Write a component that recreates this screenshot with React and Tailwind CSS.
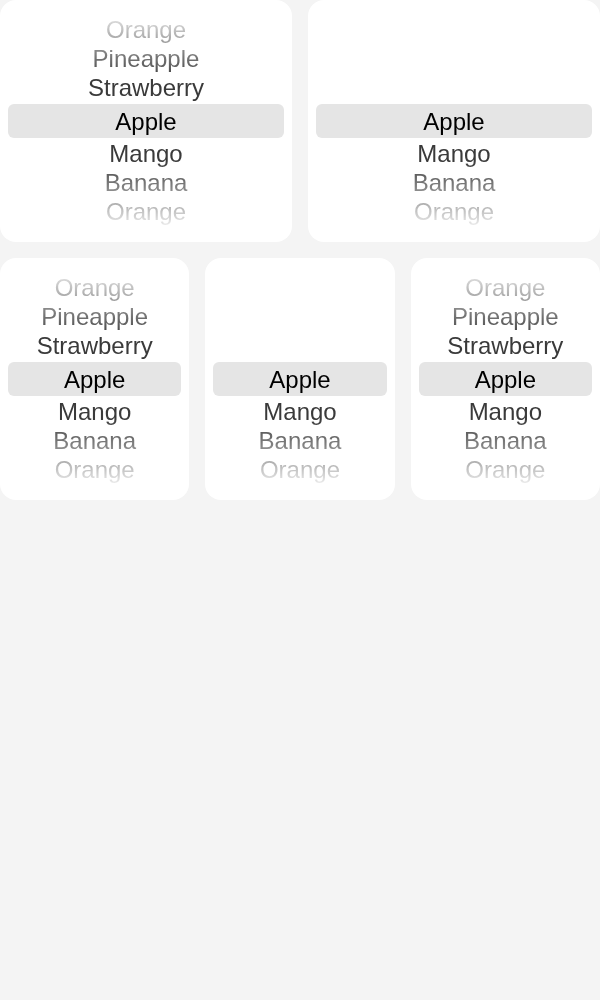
import React from "react";

const FULL = ["Orange", "Pineapple", "Strawberry"];
const BELOW = ["Mango", "Banana", "Orange"];

function Picker({ showAbove }) {
  return (
    <div className="rounded-2xl bg-white p-2">
      <div className="relative h-[226px] overflow-hidden">
        <div className="absolute left-0 right-0 top-[96px] h-[34px] rounded-md bg-[#e5e5e5]" />
        <div
          className="relative flex h-full -translate-y-px flex-col justify-center text-center text-[24px] leading-[29px] text-[#3a3a3a]"
          style={{
            fontFamily: '"Liberation Sans", Arial, sans-serif',
            WebkitMaskImage:
              "linear-gradient(to bottom, rgba(0,0,0,0) 0%, rgba(0,0,0,1) 32%, rgba(0,0,0,1) 68%, rgba(0,0,0,0) 100%)",
            maskImage:
              "linear-gradient(to bottom, rgba(0,0,0,0) 0%, rgba(0,0,0,1) 32%, rgba(0,0,0,1) 68%, rgba(0,0,0,0) 100%)",
          }}
        >
          {FULL.map((f, i) => (
            <div key={"a" + i} className="h-[29px]">
              {showAbove ? f : "\u00a0"}
            </div>
          ))}
          <div className="flex h-[37px] translate-y-px items-center justify-center text-black">Apple</div>
          {BELOW.map((f, i) => (
            <div key={"b" + i} className="h-[29px]">
              {f}
            </div>
          ))}
        </div>
      </div>
    </div>
  );
}

export default function App() {
  return (
    <div className="min-h-[1000px] w-[600px] bg-[#f4f4f4]">
      <div className="flex flex-col gap-4">
        <div className="grid grid-cols-2 gap-4">
          <Picker showAbove />
          <Picker showAbove={false} />
        </div>
        <div className="grid grid-cols-3 gap-4">
          <Picker showAbove />
          <Picker showAbove={false} />
          <Picker showAbove />
        </div>
      </div>
    </div>
  );
}
